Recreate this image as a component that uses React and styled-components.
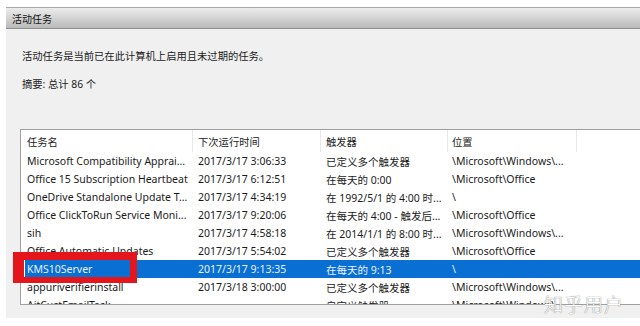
import React from 'react';
import styled, { createGlobalStyle } from 'styled-components';

const GlobalStyle = createGlobalStyle`
  html, body {
    margin: 0;
    padding: 0;
    background: #ffffff;
  }
  body {
    width: 640px;
    height: 326px;
    overflow: hidden;
    font-family: "Noto Sans", "Noto Sans CJK SC", sans-serif;
    color: #1b1b1b;
  }
`;

const Page = styled.div`
  position: relative;
  width: 640px;
  height: 326px;
  padding: 7px 0 0 6px;
  box-sizing: border-box;
  overflow: hidden;
`;

const Panel = styled.div`
  display: flex;
  flex-direction: column;
  height: 311px;
  background: #f0f0f0;
`;

const TitleBar = styled.div`
  height: 20px;
  display: flex;
  align-items: center;
  padding-left: 6px;
  border-top: 1px solid #a8a8a8;
  border-bottom: 1px solid #8e8e8e;
  background: linear-gradient(#ececec, #d6d6d6 45%, #b9b9b9);
  font-size: 10px;
  color: #111;
`;

const Body = styled.div`
  padding: 19px 0 0 16px;
  display: flex;
  flex-direction: column;
`;

const Line = styled.div`
  font-size: 10.3px;
  line-height: 16px;
  height: 16px;
  margin-bottom: ${(p) => p.gap || 0}px;
`;

const Table = styled.div`
  margin-left: -2px;
  height: 174px;
  overflow: hidden;
  background: #ffffff;
  border-top: 1px solid #a0a0a0;
  border-left: 1px solid #a0a0a0;
  border-bottom: 1px solid #a0a0a0;
`;

const HeaderRow = styled.div`
  display: grid;
  grid-template-columns: 168px 128px 127px 129px;
  margin-left: 4px;
  height: 22px;
`;

const HeaderCell = styled.div`
  display: flex;
  align-items: center;
  padding-left: ${(p) => p.pad}px;
  border-right: 1px solid #e8e8e8;
  font-size: 10.3px;
  color: #222;
`;

const Row = styled.div`
  display: grid;
  grid-template-columns: 168px 128px 127px 129px;
  margin-left: 4px;
  height: 18px;
  background: ${(p) => (p.selected ? '#0a6fd2' : 'transparent')};
  color: ${(p) => (p.selected ? '#e8f1ff' : '#1b1b1b')};
`;

const Cell = styled.div`
  display: flex;
  align-items: center;
  padding-left: ${(p) => p.pad}px;
  font-size: 10.5px;
  white-space: nowrap;
  overflow: hidden;
`;

const RedBox = styled.div`
  position: absolute;
  left: 13px;
  top: 252px;
  width: 124px;
  height: 31px;
  box-sizing: border-box;
  border-style: solid;
  border-color: #e4161c;
  border-width: 8px 7px 6px 11px;
`;

const Watermark = styled.div`
  position: absolute;
  left: 544px;
  top: 290px;
  font-family: "Noto Sans CJK SC", sans-serif;
  font-size: 19px;
  font-weight: 300;
  letter-spacing: 1px;
  color: #ffffff;
  text-shadow: 0 0 1px #8a8a8a, 0 0 1px #8a8a8a;
`;

const pads = [2, 5, 5, 4];

const rows = [
  ['Microsoft Compatibility Apprai...', '2017/3/17 3:06:33', '已定义多个触发器', '\\Microsoft\\Windows\\...'],
  ['Office 15 Subscription Heartbeat', '2017/3/17 6:12:51', '在每天的 0:00', '\\Microsoft\\Office'],
  ['OneDrive Standalone Update T...', '2017/3/17 4:34:19', '在 1992/5/1 的 4:00 时...', '\\'],
  ['Office ClickToRun Service Moni...', '2017/3/17 9:20:06', '在每天的 4:00 - 触发后...', '\\Microsoft\\Office'],
  ['sih', '2017/3/17 4:58:18', '在 2014/1/1 的 8:00 时...', '\\Microsoft\\Windows\\...'],
  ['Office Automatic Updates', '2017/3/17 5:54:02', '已定义多个触发器', '\\Microsoft\\Office'],
  ['KMS10Server', '2017/3/17 9:13:35', '在每天的 9:13', '\\', true],
  ['appuriverifierinstall', '2017/3/18 3:00:00', '已定义多个触发器', '\\Microsoft\\Windows\\...'],
  ['AitCustEmailTask', '', '自定义触发器', '\\Microsoft\\Windows\\...'],
];

const App = () => (
  <Page>
    <GlobalStyle />
    <Panel>
      <TitleBar>活动任务</TitleBar>
      <Body>
        <Line gap={12}>活动任务是当前已在此计算机上启用且未过期的任务。</Line>
        <Line gap={37}>摘要: 总计 86 个</Line>
        <Table>
          <HeaderRow>
            {['任务名', '下次运行时间', '触发器', '位置'].map((h, i) => (
              <HeaderCell key={h} pad={pads[i]}>{h}</HeaderCell>
            ))}
          </HeaderRow>
          {rows.map((r) => (
            <Row key={r[0]} selected={r[4]}>
              {r.slice(0, 4).map((c, i) => (
                <Cell key={i} pad={pads[i]}>{c}</Cell>
              ))}
            </Row>
          ))}
        </Table>
      </Body>
    </Panel>
    <RedBox />
    <Watermark>知乎用户</Watermark>
  </Page>
);

export default App;
